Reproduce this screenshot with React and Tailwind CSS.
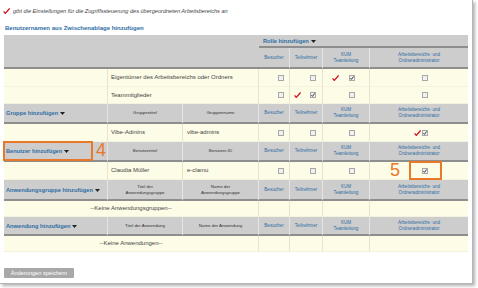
import React from "react";

const font = { fontFamily: '"Liberation Sans", Arial, sans-serif' };

function Tick() {
  return (
    <svg width="7" height="6" viewBox="0 0 7 6" className="shrink-0">
      <path d="M0.6 3.4 L2.3 5.4 L6.6 0.4" fill="none" stroke="#d4121e" strokeWidth="1.3" />
    </svg>
  );
}

function Box({ checked }) {
  return (
    <span className="inline-flex h-[6px] w-[6px] shrink-0 items-center justify-center border border-[#a8a8a8] bg-[#f1f1f1]">
      {checked && (
        <svg width="4" height="4" viewBox="0 0 4 4">
          <path d="M0.4 2.1 L1.5 3.4 L3.6 0.4" fill="none" stroke="#2b2b3a" strokeWidth="0.9" />
        </svg>
      )}
    </span>
  );
}

function Arrow() {
  return (
    <svg width="5" height="3" viewBox="0 0 5 3" className="ml-[2px] inline-block">
      <path d="M0 0 L5 0 L2.5 3 Z" fill="#222" />
    </svg>
  );
}

const roleCols = [
  "flex items-center justify-end gap-[9px] pr-[5px]",
  "flex items-center justify-end gap-[9px] pr-[6px]",
  "flex items-center justify-end gap-[10px] pr-[14px]",
  "flex items-center justify-end gap-[1px] pr-[40px]",
];

function RoleHeaders() {
  const cls =
    "border-b-2 border-r border-b-[#8e8e8e] border-r-[#e4e4e4] text-center align-middle text-[4.6px] leading-[6px] text-[#2e6da4]";
  return (
    <>
      <td className={cls}>Besucher</td>
      <td className={cls}>Teilnehmer</td>
      <td className={cls}>
        KUM
        <br />
        Teamleitung
      </td>
      <td className={cls + " border-r-0"}>
        Arbeitsbereichs- und
        <br />
        Ordneradministrator
      </td>
    </>
  );
}

function RoleCells({ cells }) {
  return cells.map((c, i) => (
    <td key={i} className="border-b border-r border-b-[#f3f3df] border-r-[#e6e6cc] align-middle last:border-r-0">
      {c && (
        <div className={roleCols[i]}>
          {c.tick && <Tick />}
          <Box checked={c.checked} />
        </div>
      )}
    </td>
  ));
}

function GroupHeader({ label, a, b, children }) {
  const sub =
    "border-b-2 border-r border-b-[#8e8e8e] border-r-[#e4e4e4] text-center align-middle text-[4.4px] leading-[6px] text-[#333]";
  return (
    <>
      <td className="relative border-b-2 border-r border-b-[#8e8e8e] border-r-[#e4e4e4] pl-[2px] align-middle text-[5.7px] font-bold text-[#2e6da4]">
        {label}
        <Arrow />
        {children}
      </td>
      <td className={sub}>{a}</td>
      <td className={sub}>{b}</td>
      <RoleHeaders />
    </>
  );
}

const yCell = "border-b border-r border-b-[#f3f3df] border-r-[#e6e6cc] align-middle text-[6px] text-[#444]";

export default function App() {
  const u = { checked: false };
  return (
    <div className="h-[288px] w-[478px] overflow-hidden bg-white" style={font}>
      <div className="h-[284px] w-[473px] border-b border-r border-[#b5b5b5] bg-white shadow-[2px_2px_3px_rgba(0,0,0,0.3)]">
        <div className="flex items-center gap-[3px] pl-[3px] pt-[7px] text-[5.6px] italic text-[#444]">
          <Tick />
          <span>gibt die Einstellungen für die Zugriffssteuerung des übergeordneten Arbeitsbereichs an</span>
        </div>
        <div className="pl-[5px] pt-[10px] text-[6px] font-bold leading-[7px] text-[#2e6da4]">
          Benutzernamen aus Zwischenablage hinzufügen
        </div>
        <table className="ml-[4px] mt-[3px] w-[464px] table-fixed border-separate border-spacing-0 bg-[#fdfce7]">
          <colgroup>
            <col className="w-[104px]" />
            <col className="w-[75px]" />
            <col className="w-[76px]" />
            <col className="w-[31px]" />
            <col className="w-[33px]" />
            <col className="w-[47px]" />
            <col className="w-[98px]" />
          </colgroup>
          <tbody>
            <tr className="h-[13px] bg-[#cdcdcd]">
              <td rowSpan={2} colSpan={3} className="border-b-2 border-b-[#8e8e8e]" />
              <td colSpan={4} className="border-b-2 border-b-[#8e8e8e] pl-[4px] align-middle text-[5.7px] font-bold text-[#2e6da4]">
                Rolle hinzufügen
                <Arrow />
              </td>
            </tr>
            <tr className="h-[21px] bg-[#cdcdcd]">
              <RoleHeaders />
            </tr>
            <tr className="h-[18px]">
              <td className={yCell} />
              <td colSpan={2} className={yCell + " pl-[3px]"}>
                Eigentümer des Arbeitsbereichs oder Ordners
              </td>
              <RoleCells cells={[u, u, { tick: true, checked: true }, u]} />
            </tr>
            <tr className="h-[17px]">
              <td className={yCell} />
              <td colSpan={2} className={yCell + " pl-[3px]"}>
                Teammitglieder
              </td>
              <RoleCells cells={[u, { tick: true, checked: true }, u, u]} />
            </tr>
            <tr className="h-[20px] bg-[#cdcdcd]">
              <GroupHeader label="Gruppe hinzufügen" a="Gruppentitel" b="Gruppenname" />
            </tr>
            <tr className="h-[18px]">
              <td className={yCell} />
              <td className={yCell + " pl-[3px]"}>Vibe-Admins</td>
              <td className={yCell + " pl-[4px]"}>vibe-admins</td>
              <RoleCells cells={[u, u, u, { tick: true, checked: true }]} />
            </tr>
            <tr className="h-[20px] bg-[#cdcdcd]">
              <GroupHeader label="Benutzer hinzufügen" a="Benutzertitel" b="Benutzer-ID">
                <span className="absolute left-[-1px] top-[-1px] h-[20px] w-[90px] border-2 border-[#e8782a]" />
                <span className="absolute left-[92px] top-[-3px] text-[18px] font-normal leading-[22px] text-[#e8782a]">4</span>
              </GroupHeader>
            </tr>
            <tr className="h-[18px]">
              <td className={yCell} />
              <td className={yCell + " pl-[3px]"}>Claudia Müller</td>
              <td className={yCell + " pl-[4px]"}>e-clamu</td>
              <td className="border-b border-r border-b-[#f3f3df] border-r-[#e6e6cc] align-middle">
                <div className={roleCols[0]}>
                  <Box />
                </div>
              </td>
              <td className="border-b border-r border-b-[#f3f3df] border-r-[#e6e6cc] align-middle">
                <div className={roleCols[1]}>
                  <Box />
                </div>
              </td>
              <td className="border-b border-r border-b-[#f3f3df] border-r-[#e6e6cc] align-middle">
                <div className={roleCols[2]}>
                  <Box />
                </div>
              </td>
              <td className="relative border-b border-b-[#f3f3df] align-middle">
                <div className={roleCols[3]}>
                  <Box checked />
                </div>
                <span className="absolute left-[39px] top-[-1px] h-[19px] w-[33px] border-2 border-[#e8782a]" />
                <span className="absolute left-[20px] top-[-3px] text-[18px] leading-[22px] text-[#e8782a]">5</span>
              </td>
            </tr>
            <tr className="h-[21px] bg-[#cdcdcd]">
              <GroupHeader
                label="Anwendungsgruppe hinzufügen"
                a={<>Titel der<br />Anwendungsgruppe</>}
                b={<>Name der<br />Anwendungsgruppe</>}
              />
            </tr>
            <tr className="h-[16px]">
              <td colSpan={3} className={yCell + " text-center"}>
                --Keine Anwendungsgruppen--
              </td>
              <RoleCells cells={[null, null, null, null]} />
            </tr>
            <tr className="h-[19px] bg-[#cdcdcd]">
              <GroupHeader label="Anwendung hinzufügen" a="Titel der Anwendung" b="Name der Anwendung" />
            </tr>
            <tr className="h-[16px]">
              <td colSpan={3} className={yCell + " text-center"}>
                --Keine Anwendungen--
              </td>
              <RoleCells cells={[null, null, null, null]} />
            </tr>
          </tbody>
        </table>
        <button className="ml-[4px] mt-[16px] flex h-[10px] w-[70px] items-center justify-center rounded-[1px] bg-[#a8a8a8] text-[5.6px] text-white">
          Änderungen speichern
        </button>
      </div>
    </div>
  );
}
